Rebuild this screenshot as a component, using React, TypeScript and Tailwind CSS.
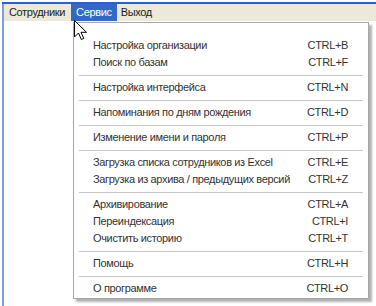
import React from 'react';

type Item = { label: string; key: string } | 'sep';

const items: Item[] = [
  { label: 'Настройка организации', key: 'CTRL+B' },
  { label: 'Поиск по базам', key: 'CTRL+F' },
  'sep',
  { label: 'Настройка интерфейса', key: 'CTRL+N' },
  'sep',
  { label: 'Напоминания по дням рождения', key: 'CTRL+D' },
  'sep',
  { label: 'Изменение имени и пароля', key: 'CTRL+P' },
  'sep',
  { label: 'Загрузка списка сотрудников из Excel', key: 'CTRL+E' },
  { label: 'Загрузка из архива / предыдущих версий', key: 'CTRL+Z' },
  'sep',
  { label: 'Архивирование', key: 'CTRL+A' },
  { label: 'Переиндексация', key: 'CTRL+I' },
  { label: 'Очистить историю', key: 'CTRL+T' },
  'sep',
  { label: 'Помощь', key: 'CTRL+H' },
  'sep',
  { label: 'О программе', key: 'CTRL+O' },
];

// курсор мыши
const Cursor = () => (
  <svg className="absolute left-[74px] top-[20px]" width="15" height="22" viewBox="0 0 15 22">
    <path
      d="M0.5 0.5 L0.5 17 L4.5 13 L7.3 19.5 L9.8 18.4 L7 12.3 L12.5 12.3 Z"
      fill="#fff"
      stroke="#000"
      strokeWidth="1"
    />
  </svg>
);

export default function App() {
  return (
    <div
      className="relative w-[376px] h-[306px] bg-white overflow-hidden text-[11px] tracking-[-0.35px] text-[#333]"
      style={{ fontFamily: '"Liberation Sans", Arial, sans-serif' }}
    >
      {/* рамка окна */}
      <div className="h-[2px] bg-white" />
      <div className="h-[2px] ml-[2px] bg-[#2a5fd8]" />
      <div className="flex h-[302px]">
        <div className="w-[2px] ml-[2px] bg-[#7f9ee0]" />
        <div className="flex-1 flex flex-col">
          {/* меню */}
          <div className="flex items-stretch h-[17px] bg-[#ECE9D8] text-[#1a1a1a]">
            <div className="pl-[5px] pr-[6px] flex items-center">Сотрудники</div>
            <div className="px-[5px] flex items-center bg-[#316AC5] text-white">Сервис</div>
            <div className="px-[4px] flex items-center">Выход</div>
          </div>
          <div className="flex-1 bg-white" />
        </div>
      </div>

      {/* выпадающее меню */}
      <div className="absolute left-[73px] top-[22px] w-[296px] bg-white border border-[#a7a6a0] shadow-[3px_3px_2px_rgba(0,0,0,0.3)] pt-[14px] pb-[1px]">
        {items.map((it, i) =>
          it === 'sep' ? (
            <div key={i} className="h-[8px] flex items-center px-[5px]">
              <div className="h-px w-full bg-[#c8c6c0]" />
            </div>
          ) : (
            <div key={i} className="h-[17px] flex items-center justify-between pl-[19px] pr-[20px]">
              <span>{it.label}</span>
              <span>{it.key}</span>
            </div>
          )
        )}
      </div>

      <Cursor />
    </div>
  );
}
